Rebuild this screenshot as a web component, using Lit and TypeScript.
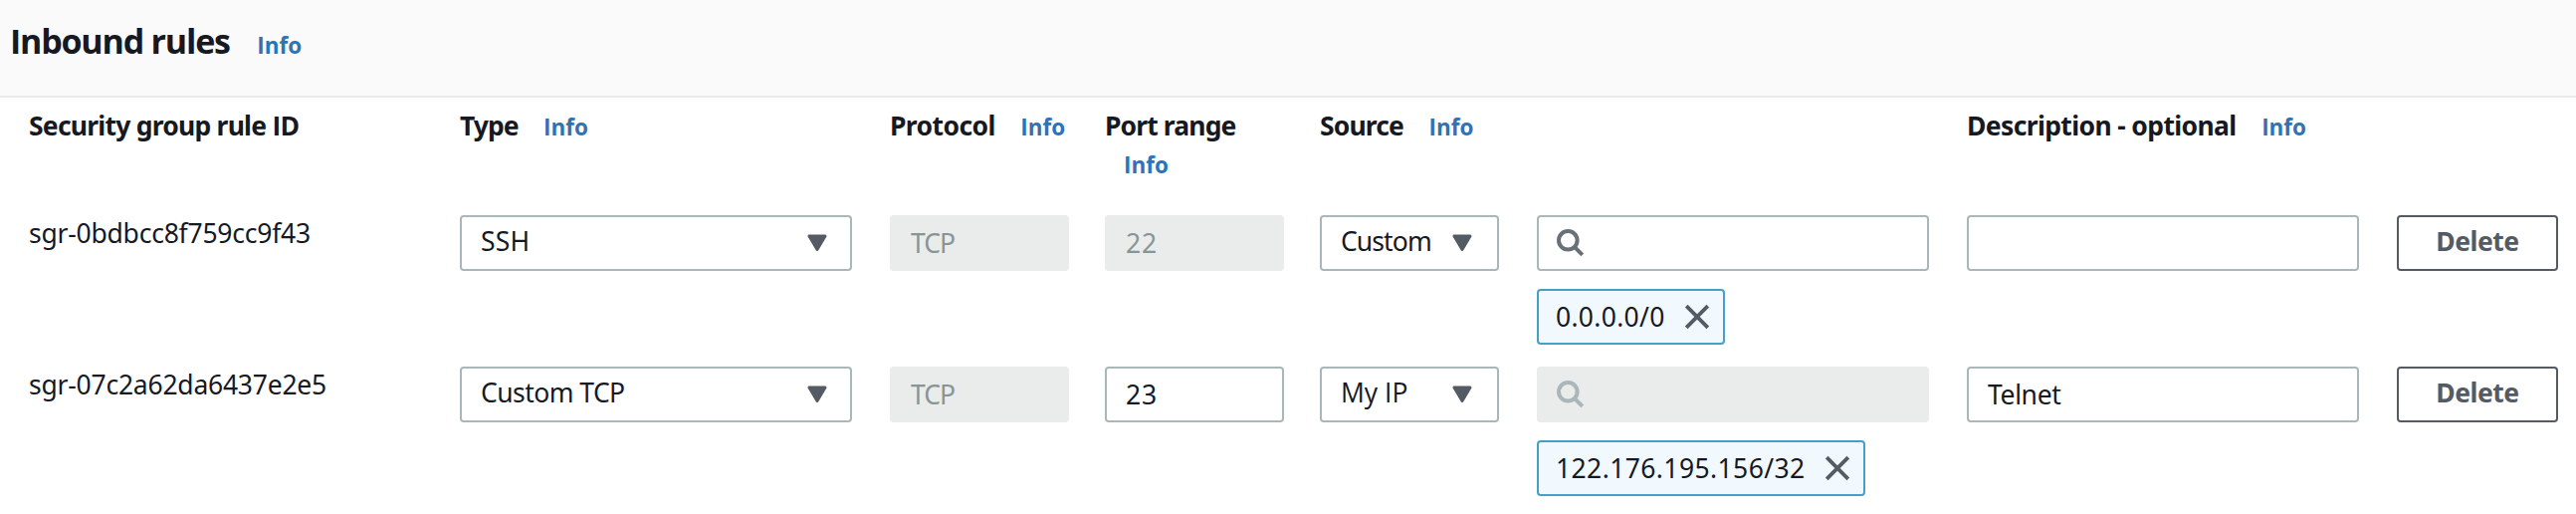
import { LitElement, html, css, nothing } from "lit";
import { customElement, property } from "lit/decorators.js";
import { classMap } from "lit/directives/class-map.js";
import { styleMap } from "lit/directives/style-map.js";

interface Label {
  text: string;
  tracking: number;
  alt?: boolean;
}

interface Rule {
  id: Label;
  type: Label;
  protocol: Label;
  port: Label;
  portDisabled: boolean;
  source: Label;
  searchDisabled: boolean;
  token: Label;
  description?: Label;
}

const label = (text: string, tracking = 0, alt = false): Label => ({ text, tracking, alt });

const RULES: Rule[] = [
  {
    id: label("sgr-0bdbcc8f759cc9f43", -0.23),
    type: label("SSH", 0.2),
    protocol: label("TCP", -1),
    port: label("22", 0.8),
    portDisabled: true,
    source: label("Custom", -0.9),
    searchDisabled: false,
    token: label("0.0.0.0/0", 0.3),
  },
  {
    id: label("sgr-07c2a62da6437e2e5", -0.23),
    type: label("Custom TCP", -0.55),
    protocol: label("TCP", -1),
    port: label("23", 0.8),
    portDisabled: false,
    source: label("My IP", 0, true),
    searchDisabled: true,
    token: label("122.176.195.156/32", 0.4),
    description: label("Telnet", -0.35),
  },
];

const text = (l: Label) => html`<span
  class=${classMap({ text: true, alt: !!l.alt })}
  style=${styleMap({ letterSpacing: `${l.tracking}px` })}
  >${l.text}</span
>`;

const textStyles = css`
  .text {
    white-space: nowrap;
  }
  .alt {
    font-family: "Open Sans", "Noto Sans", sans-serif;
  }
`;

@customElement("info-link")
class InfoLink extends LitElement {
  static styles = css`
    :host {
      display: inline-block;
      font: 700 22.5px "Open Sans", "Noto Sans", sans-serif;
      line-height: inherit;
      color: #2e73b8;
    }
  `;
  render() {
    return html`Info`;
  }
}

@customElement("select-box")
class SelectBox extends LitElement {
  @property({ attribute: false }) value!: Label;
  @property({ type: Boolean, reflect: true }) compact = false;
  static styles = [
    textStyles,
    css`
      :host {
        box-sizing: border-box;
        display: flex;
        align-items: center;
        justify-content: space-between;
        height: 56px;
        padding: 0 23px 0 19px;
        border: 2px solid #aab7b8;
        border-radius: 4px;
        background: #fff;
      }
      :host([compact]) {
        padding-right: 25px;
      }
      .text {
        padding-bottom: 4px;
      }
      .caret {
        display: block;
        flex: none;
      }
    `,
  ];
  render() {
    return html`${text(this.value)}
      <svg class="caret" width="20" height="18" viewBox="0 0 20 18">
        <path d="M2 2H18L10 15.5Z" fill="#545b64" stroke="#545b64" stroke-width="3" stroke-linejoin="round" />
      </svg>`;
  }
}

@customElement("text-box")
class TextBox extends LitElement {
  @property({ attribute: false }) value?: Label;
  @property({ type: Boolean, reflect: true }) disabled = false;
  @property({ type: Boolean, reflect: true }) search = false;
  static styles = [
    textStyles,
    css`
      :host {
        box-sizing: border-box;
        display: flex;
        align-items: center;
        height: 56px;
        padding: 0 19px;
        border: 2px solid #aab7b8;
        border-radius: 4px;
        background: #fff;
        color: #16191f;
      }
      :host([search]) {
        padding: 0 18px;
      }
      :host([disabled]) {
        border-color: #eaecec;
        background: #eaecec;
        color: #879596;
      }
      .glass {
        display: block;
        fill: none;
        stroke: #687078;
        stroke-width: 4;
      }
      :host([disabled]) .glass {
        stroke: #aab7b8;
      }
    `,
  ];
  render() {
    return html`${this.search
      ? html`<svg class="glass" width="28" height="28" viewBox="0 0 28 28">
          <circle cx="11.3" cy="11.3" r="9.3" />
          <path d="M17.8 17.8L25.8 25.8" />
        </svg>`
      : nothing}${this.value ? text(this.value) : nothing}`;
  }
}

@customElement("source-token")
class SourceToken extends LitElement {
  @property({ attribute: false }) value!: Label;
  static styles = [
    textStyles,
    css`
      :host {
        box-sizing: border-box;
        display: inline-flex;
        align-items: center;
        gap: 19px;
        height: 56px;
        padding: 0 13px 0 17px;
        border: 2px solid #459fc8;
        border-radius: 4px;
        background: #f2f9fe;
      }
      .close {
        display: block;
        flex: none;
      }
    `,
  ];
  render() {
    return html`${text(this.value)}
      <svg class="close" width="26" height="26" viewBox="0 0 26 26">
        <path d="M2.2 2.2L23.8 23.8M23.8 2.2L2.2 23.8" fill="none" stroke="#545b64" stroke-width="3.8" />
      </svg>`;
  }
}

@customElement("app-root")
class AppRoot extends LitElement {
  static styles = [
    textStyles,
    css`
      :host {
        display: block;
        box-sizing: border-box;
        height: 516px;
        overflow: hidden;
        background: #fff;
        color: #16191f;
        font: 400 26.5px "Noto Sans", "Open Sans", sans-serif;
        line-height: 38px;
      }
      .header {
        box-sizing: border-box;
        display: flex;
        align-items: baseline;
        gap: 27.5px;
        height: 98px;
        padding: 16px 0 0 10px;
        border-bottom: 2px solid #eaecec;
        background: #fafafa;
        line-height: 50px;
      }
      .title {
        margin: 0;
        font: 700 34px "Open Sans", "Noto Sans", sans-serif;
        line-height: 50px;
      }
      .grid {
        display: grid;
        grid-template-columns: 433px 432px 216px 216px 218px 432px 432px 162px;
        padding-left: 29px;
      }
      .cell {
        padding-right: 38px;
      }
      .narrow {
        padding-right: 36px;
      }
      .last {
        padding-right: 0;
      }
      .heads {
        height: 118px;
        box-sizing: border-box;
        padding-top: 9px;
        font-weight: 700;
      }
      .head {
        white-space: nowrap;
      }
      .head info-link {
        margin-left: 25.5px;
      }
      .stacked info-link {
        display: block;
        margin: 2px 0 0 19px;
      }
      .row {
        height: 152px;
      }
      .id {
        margin-top: -4px;
        line-height: 44px;
      }
      .token {
        margin-top: 18px;
      }
      .delete {
        box-sizing: border-box;
        width: 100%;
        height: 56px;
        padding: 0 0 4px;
        border: 2px solid #545b64;
        border-radius: 4px;
        background: #fff;
        color: #545b64;
        font: inherit;
        font-weight: 700;
      }
    `,
  ];

  render() {
    return html`
      <header class="header">
        <h2 class="title">${text(label("Inbound rules", -1.2, true))}</h2>
        <info-link></info-link>
      </header>
      <div class="grid heads">
        <div class="head">${text(label("Security group rule ", -0.77))}${text(label("ID", -0.6, true))}</div>
        <div class="head">${text(label("Type", -1))}<info-link></info-link></div>
        <div class="head">${text(label("Protocol", -0.6))}<info-link></info-link></div>
        <div class="head stacked">${text(label("Port range", -0.88))}<info-link></info-link></div>
        <div class="head">${text(label("Source", -0.86))}<info-link></info-link></div>
        <div class="head"></div>
        <div class="head">${text(label("Description - optional", -0.63))}<info-link></info-link></div>
      </div>
      ${RULES.map(
        (r) => html`<div class="grid row">
          <div class="cell id">${text(r.id)}</div>
          <div class="cell"><select-box .value=${r.type}></select-box></div>
          <div class="cell narrow"><text-box disabled .value=${r.protocol}></text-box></div>
          <div class="cell narrow"><text-box ?disabled=${r.portDisabled} .value=${r.port}></text-box></div>
          <div class="cell"><select-box compact .value=${r.source}></select-box></div>
          <div class="cell">
            <text-box search ?disabled=${r.searchDisabled}></text-box>
            <source-token class="token" .value=${r.token}></source-token>
          </div>
          <div class="cell"><text-box .value=${r.description}></text-box></div>
          <div class="cell last"><button class="delete">${text(label("Delete", -0.48))}</button></div>
        </div>`,
      )}
    `;
  }
}
